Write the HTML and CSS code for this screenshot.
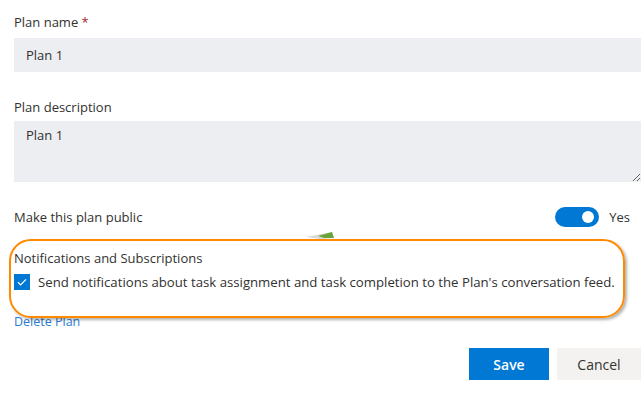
FILE: index.html
```html
<!DOCTYPE html>
<html lang="en">
<head>
    <meta charset="UTF-8">
    <title>Plan settings</title>
    <link rel="stylesheet" href="styles.css">
</head>
<body>

<div class="panel">
    <!-- Plan name -->
    <div class="field">
        <label class="field-label" for="plan-name">Plan name <span class="req">*</span></label>
        <input class="text-input" id="plan-name" type="text" value="Plan 1">
    </div>

    <!-- Plan description -->
    <div class="field">
        <label class="field-label" for="plan-desc">Plan description</label>
        <textarea class="text-area" id="plan-desc">Plan 1</textarea>
    </div>

    <!-- Public toggle -->
    <div class="toggle-row">
        <span>Make this plan public</span>
        <span class="toggle-wrap">
            <span class="toggle"><span class="knob"></span></span>
            <span>Yes</span>
        </span>
    </div>

    <!-- Notifications -->
    <div class="notify">
        <div class="notify-title">Notifications and Subscriptions</div>
        <label class="check-row">
            <span class="check">
                <svg width="16" height="16" viewBox="0 0 16 16"><path d="M4 8.3l2.6 2.6L12 5.4" fill="none" stroke="#fff" stroke-width="1.3"/></svg>
            </span>
            Send notifications about task assignment and task completion to the Plan's conversation feed.
        </label>
    </div>

    <a class="delete-link" href="#">Delete Plan</a>

    <div class="actions">
        <button class="btn btn-primary">Save</button>
        <button class="btn">Cancel</button>
    </div>

    <!-- annotation overlay -->
    <div class="highlight"></div>
    <svg class="leaf" width="40" height="12" viewBox="0 0 40 12">
        <polygon points="6,6 32,1 34,7 20,8" fill="#d8d8d8"/>
        <polygon points="18,5 32,1 34,7 24,7" fill="#6aa33a"/>
    </svg>
</div>

</body>
</html>
```

FILE: styles.css
```css
body {
    margin: 0;
    font-family: "Open Sans", "Noto Sans", sans-serif;
    font-size: 13px;
    color: #323130;
    background-color: #fff;
}
.panel {
    position: relative;
    padding: 12px 3px 0 14px;
}
.field {
    margin-bottom: 25px;
}
.field-label {
    display: block;
    line-height: 20px;
    margin-bottom: 6px;
}
.field:nth-child(2) .field-label {
    margin-bottom: 4px;
}
.req {
    color: #a4262c;
}
.text-input, .text-area {
    display: block;
    box-sizing: border-box;
    width: 100%;
    border: none;
    background-color: #edeef2;
    font-family: inherit;
    font-size: 13px;
    color: #323130;
    padding: 0 12px;
}
.text-input {
    height: 34px;
}
.text-area {
    height: 61px;
    padding-top: 5px;
    resize: vertical;
}
.field:nth-child(2) {
    margin-bottom: 24px;
}
.toggle-row {
    display: flex;
    justify-content: space-between;
    align-items: center;
    height: 22px;
    line-height: 20px;
}
.toggle-wrap {
    display: flex;
    align-items: center;
    gap: 10px;
    padding-right: 11px;
}
.toggle {
    position: relative;
    width: 44px;
    height: 20px;
    border-radius: 10px;
    background-color: #0078d4;
}
.knob {
    position: absolute;
    top: 4px;
    right: 5px;
    width: 12px;
    height: 12px;
    border-radius: 50%;
    background-color: #fff;
}
.notify {
    margin-top: 20px;
}
.notify-title {
    line-height: 20px;
    margin-bottom: 4px;
}
.check-row {
    display: flex;
    align-items: center;
    gap: 8px;
    line-height: 20px;
    white-space: nowrap;
    font-size: 13.2px;
}
.check {
    width: 16px;
    height: 16px;
    background-color: #0078d4;
    display: flex;
}
.delete-link {
    display: block;
    margin-top: 20px;
    line-height: 20px;
    color: #2b7cd3;
    text-decoration: none;
    font-size: 12.5px;
}
.actions {
    display: flex;
    justify-content: flex-end;
    gap: 8px;
    margin-top: 16px;
}
.btn {
    height: 32px;
    min-width: 80px;
    border: none;
    background-color: #f3f2f1;
    color: #323130;
    font-family: inherit;
    font-size: 14px;
    padding: 0 16px;
}
.btn + .btn {
    width: 84px;
}
.btn-primary {
    background-color: #0078d4;
    color: #fff;
    font-weight: 600;
}
.highlight {
    position: absolute;
    left: 9px;
    top: 239px;
    width: 612px;
    height: 75px;
    border: 2px solid #ff8a00;
    border-radius: 22px;
    box-shadow: 2px 2px 3px rgba(0, 0, 0, 0.3);
}
.leaf {
    position: absolute;
    left: 300px;
    top: 231px;
}
```
